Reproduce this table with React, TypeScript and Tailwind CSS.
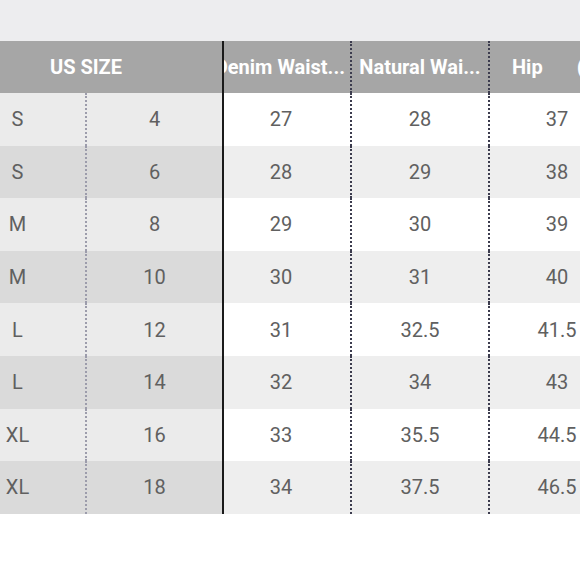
import React from "react";

const rows = [
  ["S", "4", "27", "28", "37"],
  ["S", "6", "28", "29", "38"],
  ["M", "8", "29", "30", "39"],
  ["M", "10", "30", "31", "40"],
  ["L", "12", "31", "32.5", "41.5"],
  ["L", "14", "32", "34", "43"],
  ["XL", "16", "33", "35.5", "44.5"],
  ["XL", "18", "34", "37.5", "46.5"],
];

export default function App() {
  return (
    <div
      className="w-[580px] h-[580px] bg-white overflow-hidden"
      style={{ fontFamily: "Roboto, 'Liberation Sans', sans-serif" }}
    >
      <div className="h-[41px] bg-[#ededef]" />

      <div className="flex ml-[-50px] w-max">
        {/* frozen size columns */}
        <div className="flex flex-col w-[272px]">
          <div className="h-[52px] bg-[#a6a6a6] flex items-center justify-center text-white font-bold text-[20px]">
            US SIZE
          </div>
          {rows.map((r, i) => (
            <div
              key={i}
              className={`flex h-[52.6px] text-[20px] text-[#606060] ${
                i % 2 === 0 ? "bg-[#ebebeb]" : "bg-[#dadada]"
              }`}
            >
              <div className="w-[135px] flex items-center justify-center">{r[0]}</div>
              <div className="flex-1 flex items-center justify-center border-l-2 border-dotted border-[#9c9cab]">
                {r[1]}
              </div>
            </div>
          ))}
        </div>

        <div className="w-[2px] bg-[#1a1a1a]" />

        {/* measurement columns */}
        <div className="flex flex-col">
          <div className="flex h-[52px] bg-[#a6a6a6] text-white font-bold text-[20px]">
            <div className="w-[126px] overflow-hidden flex items-center justify-end whitespace-nowrap pr-[5px]">
              <span className="shrink-0">Denim Waist...</span>
            </div>
            <div className="w-[138px] border-l-2 border-dotted border-[#3c3c4e] flex items-center justify-center whitespace-nowrap">
              Natural Wai...
            </div>
            <div className="w-[136px] border-l-2 border-dotted border-[#3c3c4e] flex items-center whitespace-nowrap pl-[22px]">
              <span>Hip</span>
              <span className="ml-[34px]">(in)</span>
            </div>
          </div>
          {rows.map((r, i) => (
            <div
              key={i}
              className={`flex h-[52.6px] text-[20px] text-[#606060] ${
                i % 2 === 0 ? "bg-white" : "bg-[#eeeeee]"
              }`}
            >
              <div className="w-[126px] flex items-center justify-center pr-[12px]">{r[2]}</div>
              <div className="w-[138px] border-l-2 border-dotted border-[#3c3c4e] flex items-center justify-center">
                {r[3]}
              </div>
              <div className="w-[136px] border-l-2 border-dotted border-[#3c3c4e] flex items-center justify-center">
                {r[4]}
              </div>
            </div>
          ))}
        </div>
      </div>
    </div>
  );
}
